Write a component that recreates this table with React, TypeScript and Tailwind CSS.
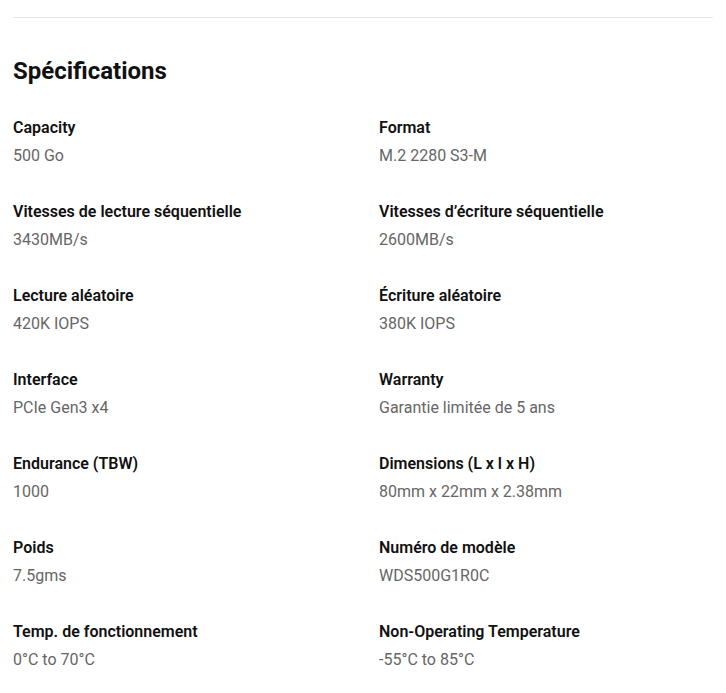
const specs: [string, string][] = [
  ["Capacity", "500 Go"],
  ["Format", "M.2 2280 S3-M"],
  ["Vitesses de lecture séquentielle", "3430MB/s"],
  ["Vitesses d’écriture séquentielle", "2600MB/s"],
  ["Lecture aléatoire", "420K IOPS"],
  ["Écriture aléatoire", "380K IOPS"],
  ["Interface", "PCIe Gen3 x4"],
  ["Warranty", "Garantie limitée de 5 ans"],
  ["Endurance (TBW)", "1000"],
  ["Dimensions (L x l x H)", "80mm x 22mm x 2.38mm"],
  ["Poids", "7.5gms"],
  ["Numéro de modèle", "WDS500G1R0C"],
  ["Temp. de fonctionnement", "0°C to 70°C"],
  ["Non-Operating Temperature", "-55°C to 85°C"],
];

export default function App() {
  return (
    <div className="min-h-screen bg-white px-[13px] pt-[17px]" style={{ fontFamily: "Roboto, 'Liberation Sans', sans-serif" }}>
      <div className="border-t border-[#e6e6e6]" />
      <h2 className="mt-[39px] text-[24px] leading-[28px] font-bold text-[#111]">Spécifications</h2>
      <div className="mt-[29px] grid grid-cols-2 gap-x-8 gap-y-[28px]">
        {specs.map(([label, value]) => (
          <div key={label}>
            <p className="text-[16px] leading-[28px] font-semibold text-[#111]">{label}</p>
            <p className="text-[16px] leading-[28px] text-[#666]">{value}</p>
          </div>
        ))}
      </div>
    </div>
  );
}
